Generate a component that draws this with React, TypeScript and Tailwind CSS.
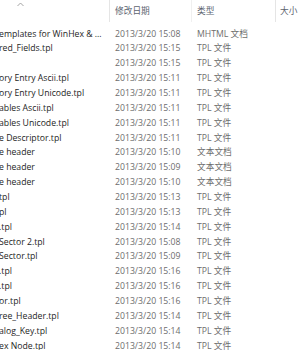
import React from 'react';

interface FileRow {
  name: string;
  date: string;
  type: string;
}

const ROWS: FileRow[] = [
  { name: 'emplates for WinHex & ...', date: '2013/3/20 15:08', type: 'MHTML 文档' },
  { name: 'red_Fields.tpl', date: '2013/3/20 15:15', type: 'TPL 文件' },
  { name: '', date: '2013/3/20 15:15', type: 'TPL 文件' },
  { name: 'ory Entry Ascii.tpl', date: '2013/3/20 15:11', type: 'TPL 文件' },
  { name: 'ory Entry Unicode.tpl', date: '2013/3/20 15:11', type: 'TPL 文件' },
  { name: 'ables Ascii.tpl', date: '2013/3/20 15:11', type: 'TPL 文件' },
  { name: 'ables Unicode.tpl', date: '2013/3/20 15:11', type: 'TPL 文件' },
  { name: 'e Descriptor.tpl', date: '2013/3/20 15:11', type: 'TPL 文件' },
  { name: 'e header', date: '2013/3/20 15:10', type: '文本文档' },
  { name: 'e header', date: '2013/3/20 15:09', type: '文本文档' },
  { name: 'e header', date: '2013/3/20 15:10', type: '文本文档' },
  { name: 'tpl', date: '2013/3/20 15:13', type: 'TPL 文件' },
  { name: 'pl', date: '2013/3/20 15:13', type: 'TPL 文件' },
  { name: '.tpl', date: '2013/3/20 15:14', type: 'TPL 文件' },
  { name: 'Sector 2.tpl', date: '2013/3/20 15:08', type: 'TPL 文件' },
  { name: 'Sector.tpl', date: '2013/3/20 15:09', type: 'TPL 文件' },
  { name: '.tpl', date: '2013/3/20 15:16', type: 'TPL 文件' },
  { name: '.tpl', date: '2013/3/20 15:16', type: 'TPL 文件' },
  { name: 'or.tpl', date: '2013/3/20 15:16', type: 'TPL 文件' },
  { name: 'ree_Header.tpl', date: '2013/3/20 15:14', type: 'TPL 文件' },
  { name: 'alog_Key.tpl', date: '2013/3/20 15:14', type: 'TPL 文件' },
  { name: 'ex Node.tpl', date: '2013/3/20 15:14', type: 'TPL 文件' },
];

const FONT = "font-['Open_Sans','Noto_Sans_CJK_SC',sans-serif]";

export default function App() {
  return (
    <div className={`w-[300px] h-[350px] overflow-hidden bg-white text-[8.7px] ${FONT}`}>
      {/* column header */}
      <div className="relative flex h-[26.6px] text-[#5c6470]">
        <div className="w-[110px] border-r border-[#e5e5e5] h-[22px] relative">
          <svg className="absolute left-[17px] top-[2px]" width="7" height="5" viewBox="0 0 7 5">
            <path d="M0.5 4 L3.5 1 L6.5 4" fill="none" stroke="#9a9a9a" strokeWidth="0.9" />
          </svg>
        </div>
        <div className="w-[82px] border-r border-[#f0f0f0] h-[22px] pl-[5px] pt-[5px]">修改日期</div>
        <div className="w-[84px] border-r border-[#e5e5e5] h-[22px] pl-[5px] pt-[5px]">类型</div>
        <div className="flex-1 pl-[4px] pt-[5px]">大小</div>
      </div>
      {/* rows */}
      <div className="flex flex-col">
        {ROWS.map((row, i) => (
          <div key={i} className="flex h-[14.87px] items-center whitespace-nowrap">
            <div className="w-[110px] overflow-hidden text-[#1e1e1e] ml-[-1px]">{row.name}</div>
            <div className="w-[83px] pl-[6px] text-[#6d6d6d]">{row.date}</div>
            <div className="w-[84px] pl-[5px] text-[#6d6d6d]">{row.type}</div>
            <div className="flex-1" />
          </div>
        ))}
      </div>
    </div>
  );
}
